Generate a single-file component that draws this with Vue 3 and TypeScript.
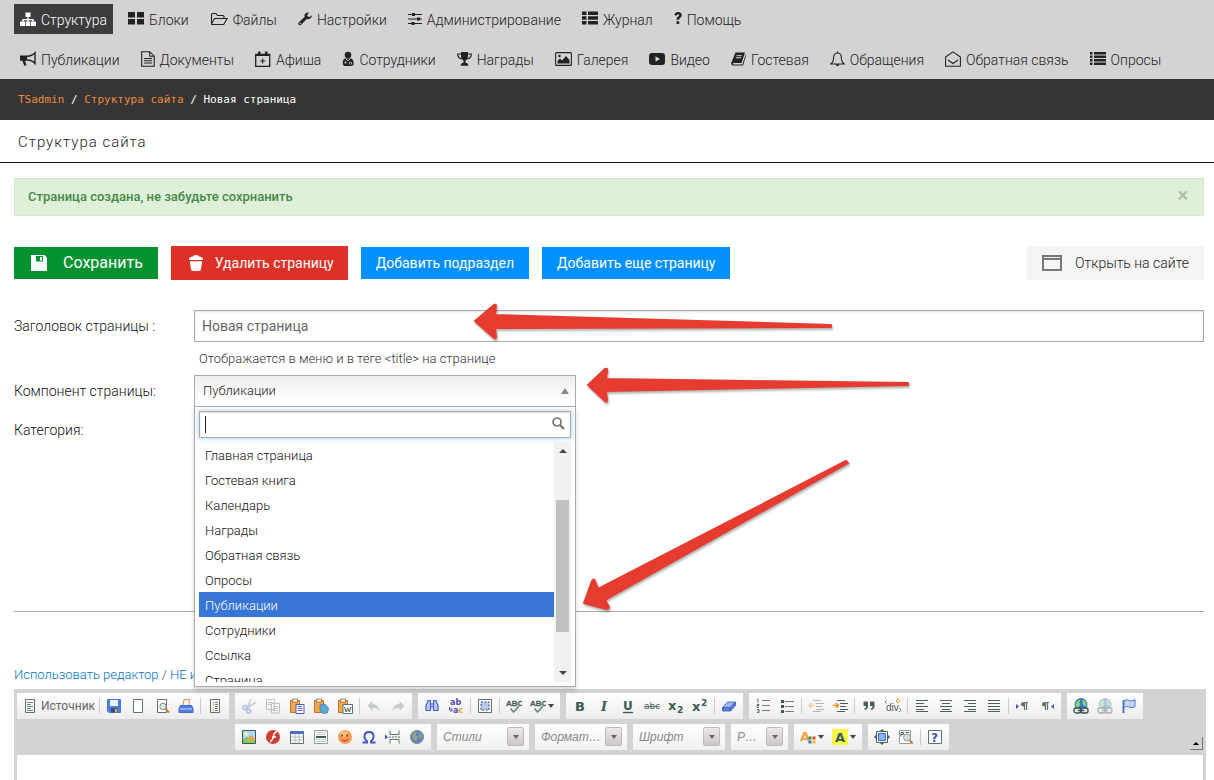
<script setup lang="ts">
import { ref } from 'vue'

interface NavItem { label: string; icon: string; w: number; active?: boolean }
interface Tool { icon?: string; title?: string; sep?: boolean; label?: string; caret?: boolean; off?: boolean }

const mainNav: NavItem[] = [
  { label: 'Структура', icon: 'sitemap', w: 16, active: true },
  { label: 'Блоки', icon: 'blocks', w: 16 },
  { label: 'Файлы', icon: 'folder', w: 18 },
  { label: 'Настройки', icon: 'wrench', w: 14 },
  { label: 'Администрирование', icon: 'sliders', w: 14 },
  { label: 'Журнал', icon: 'thlist', w: 16 },
  { label: 'Помощь', icon: 'question', w: 8 },
]

const moduleNav: NavItem[] = [
  { label: 'Публикации', icon: 'horn', w: 16 },
  { label: 'Документы', icon: 'doc', w: 14 },
  { label: 'Афиша', icon: 'calendar', w: 16 },
  { label: 'Сотрудники', icon: 'staff', w: 12 },
  { label: 'Награды', icon: 'trophy', w: 15 },
  { label: 'Галерея', icon: 'photo', w: 17 },
  { label: 'Видео', icon: 'video', w: 16 },
  { label: 'Гостевая', icon: 'book', w: 15 },
  { label: 'Обращения', icon: 'bell', w: 15 },
  { label: 'Обратная связь', icon: 'mail', w: 16 },
  { label: 'Опросы', icon: 'list', w: 16 },
]

const options: string[] = [
  'Главная страница', 'Гостевая книга', 'Календарь', 'Награды', 'Обратная связь',
  'Опросы', 'Публикации', 'Сотрудники', 'Ссылка', 'Страница',
]

const pageTitle = ref('Новая страница')
const component = ref('Публикации')
const search = ref('')

const S: Tool = { sep: true }
const sourceGroup: Tool[] = [
  { icon: 'source', title: 'Источник', label: 'Источник' }, S,
  { icon: 'save', title: 'Сохранить' }, { icon: 'newpage', title: 'Новая страница' },
  { icon: 'preview', title: 'Предварительный просмотр' }, { icon: 'print', title: 'Печать' }, S,
  { icon: 'templates', title: 'Шаблоны' },
]
const topGroups: Tool[][] = [
  [
    { icon: 'cut', title: 'Вырезать', off: true }, { icon: 'copy', title: 'Копировать', off: true },
    { icon: 'paste', title: 'Вставить' }, { icon: 'pastetext', title: 'Вставить только текст' },
    { icon: 'pasteword', title: 'Вставить из Word' }, S,
    { icon: 'undo', title: 'Отменить', off: true }, { icon: 'redo', title: 'Повторить', off: true },
  ],
  [
    { icon: 'find', title: 'Найти' }, { icon: 'replace', title: 'Заменить' }, S,
    { icon: 'selectall', title: 'Выделить все' }, S,
    { icon: 'spell', title: 'Проверить орфографию' }, { icon: 'spell', title: 'Проверка по мере ввода', caret: true },
  ],
  [
    { icon: 'bold', title: 'Полужирный' }, { icon: 'italic', title: 'Курсив' }, { icon: 'underline', title: 'Подчеркнутый' },
    { icon: 'strike', title: 'Зачеркнутый' }, { icon: 'sub', title: 'Подстрочный' }, { icon: 'sup', title: 'Надстрочный' }, S,
    { icon: 'eraser', title: 'Убрать форматирование' },
  ],
  [
    { icon: 'ol', title: 'Нумерованный список' }, { icon: 'ul', title: 'Маркированный список' }, S,
    { icon: 'outdent', title: 'Уменьшить отступ', off: true }, { icon: 'indent', title: 'Увеличить отступ' }, S,
    { icon: 'quote', title: 'Цитата' }, { icon: 'divc', title: 'Контейнер div' }, S,
    { icon: 'left', title: 'По левому краю' }, { icon: 'center', title: 'По центру' },
    { icon: 'right', title: 'По правому краю' }, { icon: 'justify', title: 'По ширине' }, S,
    { icon: 'ltr', title: 'Слева направо' }, { icon: 'rtl', title: 'Справа налево' },
  ],
  [
    { icon: 'link', title: 'Ссылка' }, { icon: 'link', title: 'Убрать ссылку', off: true }, { icon: 'flag', title: 'Якорь' },
  ],
]
const insertGroup: Tool[] = [
  { icon: 'image', title: 'Изображение' }, { icon: 'flash', title: 'Flash' }, { icon: 'table', title: 'Таблица' },
  { icon: 'hr', title: 'Горизонтальная линия' }, { icon: 'smile', title: 'Смайл' }, { icon: 'omega', title: 'Спецсимвол' },
  { icon: 'pagebreak', title: 'Разрыв страницы' }, { icon: 'globe', title: 'iFrame' },
]
const combos = [
  { text: 'Стили', title: 'Стили', small: false },
  { text: 'Формат…', title: 'Форматирование', small: false },
  { text: 'Шрифт', title: 'Шрифт', small: false },
  { text: 'Р…', title: 'Размер', small: true },
]
const tailGroups: Tool[][] = [
  [{ icon: 'color', title: 'Цвет текста', caret: true }, { icon: 'bgcolor', title: 'Цвет фона', caret: true }],
  [{ icon: 'maximize', title: 'Развернуть' }, { icon: 'showblocks', title: 'Отображать блоки' }, S, { icon: 'about', title: 'О редакторе' }],
]

const page = '<path d="M3.5 1.5h9v13h-9z" fill="#fff" stroke="#5d716e"/>'
const board = '<path d="M1.500 2.500h9v12h-9z" fill="#f0a848" stroke="#b9732c"/><path d="M3.500 1h5v3h-5z" fill="#f5efe4" stroke="#8a6a45" stroke-width=".8"/>'
const glob = '<circle cx="8" cy="6.500" r="6" fill="#3f6fd8" stroke="#35507a" stroke-width=".7"/><path d="M2.500 6q1-4 5-4.500l-1 3 1 2-2 3-3-1zM9.500 1.500q4 1 4 6l-2 1-2-3z" fill="#74dc70"/><rect x="1" y="10" width="7" height="5" rx="2" fill="#dbe6e2" stroke="#35524e" stroke-width="1.300"/><rect x="8" y="10" width="7" height="5" rx="2" fill="#dbe6e2" stroke="#35524e" stroke-width="1.300"/><path d="M5 12.500h6" stroke="#35524e" stroke-width="1.500"/>'

const icons: Record<string, string> = {
  sitemap: '<path d="M5.500 1.500h5v4.500h-1.800v2h5v2.500H16V15h-5v-4.500h1.300V9.300H8.700v1.200h1.600V15h-4.600v-4.500h1.600V9.300H3.700v1.200H5V15H0v-4.500h2.300V8h5V6H5.500z"/>',
  blocks: '<path d="M0 1h7v5.500H0zM9 1h7v5.500H9zM0 8h7v5.500H0zM9 8h7v5.500H9z"/>',
  folder: '<path d="M1.500 13V3.500q0-1 1-1h3.500l1.500 2h5.500q1 0 1 1V7M1.300 13.200 4.500 7.500h12.700l-3.500 6H2q-.7 0-.7-.5" fill="none" stroke="currentColor" stroke-width="1.100"/>',
  wrench: '<path d="M13.800 4.300 11.500 6 9.700 5.600 9.200 4l2-2.400Q8.500.8 6.900 3q-.7 1.300-.3 2.900L.7 11.600q-1 1.200 0 2.200t2.200.1l5.800-5.800q1.800.5 3.500-.6 1.900-1.400 1.600-3.200zM2.300 13.200a.7.7 0 110-1.400.7.7 0 010 1.400z"/>',
  sliders: '<path d="M0 3.500h14M0 8h14M0 12.500h14" stroke="currentColor" stroke-width="1.200"/><path d="M4 2h3v3H4zM9 6.500h3v3H9zM3.500 11h3v3h-3z"/>',
  thlist: '<path d="M0 .5h4.500v3.600H0zM6 .5h10v3.600H6zM0 5.200h4.500v3.600H0zM6 5.200h10v3.600H6zM0 9.900h4.500v3.600H0zM6 9.900h10v3.600H6z"/>',
  question: '<path d="M.3 4Q1 1 4.200 1 7.800 1.200 7.800 4.300q0 1.500-1.800 2.600-.9.500-.9 1.500v.4H2.600V8q0-1.500 1.500-2.400 1.100-.7 1-1.300-.1-1-1.200-1-.8 0-1.500 1.500zM2.500 10.300h2.700V13H2.500z"/>',
  horn: '<path d="M0 4.500h7v5.200H5l1.500 4.500-2.200.6-2-5.100H0z"/><path d="M7 5.200q5 0 8-3.400v10.700Q12 9 7 9" fill="none" stroke="currentColor" stroke-width="1.400"/>',
  doc: '<path d="M.7.700h8l4.500 4.500v10H.7zM8.700.700v4.500h4.500" fill="none" stroke="currentColor" stroke-width="1.100"/><path d="M3 7.500h8M3 9.700h8M3 12h8" stroke="currentColor" stroke-width="1"/>',
  calendar: '<path d="M.700 3.500h14v11.800H.700z" fill="none" stroke="currentColor" stroke-width="1.300"/><path d="M.7 3h14v2H.7zM3 .5h2.500V4H3zM10 .5h2.500V4H10z"/><path d="M7.700 7.500v5M5.200 10h5" stroke="currentColor" stroke-width="1.100"/>',
  staff: '<circle cx="6" cy="4" r="3.300"/><path d="M1 13.500Q0 8.500 3 7.500h6q3 1 2.500 6L10 15H2z"/><circle cx="3.500" cy="11.500" r="1" fill="#d3d3d3"/><path d="M7.500 13.500v-2h2v2M4 8l2 2 2-2" fill="none" stroke="#d3d3d3" stroke-width=".8"/>',
  trophy: '<path d="M4 1h7v4q0 3.500-2.500 4.500v2q2.700.5 3 3.300h-8q.3-2.800 3-3.300v-2Q4 8.500 4 5z"/><path d="M4 3H.7q0 4.500 4.300 5M11 3h3.300q0 4.500-4.300 5" fill="none" stroke="currentColor" stroke-width="1.200"/>',
  photo: '<rect x=".6" y="1.600" width="15.800" height="12.800" rx="1" fill="none" stroke="currentColor" stroke-width="1.100"/><circle cx="4.500" cy="5" r="1.300"/><path d="M2.500 12.500V10L5 7.500l2 2 4-4.500 3.500 4v3.500z"/>',
  video: '<rect y="2" width="16" height="12" rx="3"/><path d="M6.500 5.200v5.600l4.500-2.800z" fill="#d3d3d3"/>',
  book: '<path d="M4.500 1.500h9.500L10.500 12H2.500q-1 1 0 1.600h8.800L15 3q.3 1.500 0 2l-3 9.500H2Q0 14.200.2 12z"/><path d="M5.500 4.700h5.300M4.800 6.800h5.300" stroke="#d3d3d3"/>',
  bell: '<path d="M7.500.500v1.200M3.700 6Q4 2 7.500 2t3.800 4q0 5 3 7H.7q3-2 3-7z" fill="none" stroke="currentColor" stroke-width="1.100"/><path d="M5.500 13.300h4q-.5 2-2 2t-2-2z"/>',
  mail: '<path d="M.6 6 8 .800 15.400 6v9.300H.6zM3 9l5 3.500L13 9" fill="none" stroke="currentColor" stroke-width="1.100"/>',
  list: '<path d="M0 1h2.500v2.500H0zM4 1h12v2.500H4zM0 4.500h2.500V7H0zM4 4.500h12V7H4zM0 8h2.500v2.500H0zM4 8h12v2.500H4zM0 11.500h2.500V14H0zM4 11.500h12V14H4z"/>',
  floppy: '<path d="M0 0h13.500L16 2.500V16H0zM5 1v5.500h7V1zM9 2h2v3.500H9z" fill-rule="evenodd"/>',
  trash: '<path d="M5 1.500Q5 0 8 0t3 1.500q3.500.5 4 2.500v1H1V4q.5-2 4-2.500zM1.800 6.200h12.400L13 14.500q0 1.500-5 1.500t-5-1.500z"/>',
  window: '<path d="M1 1h18v14H1z" fill="none" stroke="currentColor" stroke-width="2"/><path d="M1 3h18v2H1z"/><path d="M2 2.500h4M8 2.500h10" stroke="#f4f4f4" stroke-dasharray="1 1"/>',
  magnify: '<circle cx="5" cy="5" r="4" fill="none" stroke="#777" stroke-width="1.700"/><path d="m8 8 4 4" stroke="#777" stroke-width="2.400"/>',
  source: page + '<path d="M5 4.500h6M5 8.500h6M5 12.500h6M5 6.500h4M5 10.500h4" stroke="#6d7f7c"/>',
  save: '<path d="M1.500 1.500h13v13H3l-1.500-1.500z" fill="#4a7de0" stroke="#4a74d8"/><path d="M4 2h8v6H4z" fill="#f4f7ff"/><path d="M5 10h6.500v4.500H5z" fill="#3a4c78"/><path d="M9 11h2v3.500H9z" fill="#f0a848"/>',
  newpage: page,
  preview: page + '<circle cx="9" cy="8.500" r="3.200" fill="#dfe6e6" stroke="#7a8c8a"/><path d="m11.500 11 3.500 3.500" stroke="#c87a34" stroke-width="2"/>',
  print: '<path d="m5 7 1-5.500h5.500L11 7" fill="#fdf6ec" stroke="#d8914a"/><path d="M2.500 7.500h11l1.500 3v4H1v-4z" fill="#4f7de0" stroke="#3f68c8"/><path d="M2 11h12" stroke="#c8d6f8"/>',
  templates: page + '<path d="M8 4.500h3M8 6.500h3M8 8.500h3M8 10.500h3M8 12.500h3" stroke="#6d7f7c"/><path d="M6.500 4v9" stroke="#e8a048" stroke-width="1.500" stroke-dasharray="1.500 1"/>',
  cut: '<path d="m10 1-3.500 9M15 4 7 9.500" stroke="#8696a6" stroke-width="1.800"/><circle cx="4" cy="9.500" r="2" fill="none" stroke="#4a68d0" stroke-width="1.600"/><circle cx="7.500" cy="13" r="2" fill="none" stroke="#4a68d0" stroke-width="1.600"/>',
  copy: '<path d="M1.500 1.500h8v10h-8zM6.500 5.500h8v9.500h-8z" fill="#fff" stroke="#5d716e"/><path d="M3 4.500h5M3 6.500h3M8 8.500h5M8 10.500h5M8 12.500h5" stroke="#6d7f7c"/>',
  paste: board + '<path d="M7 6.500h8v9H7z" fill="#fff" stroke="#4a5db8"/><path d="M8.500 8.500H13M8.500 10.500h5M8.500 12.500h5" stroke="#5a6ec8"/>',
  pastetext: board + '<path d="m7 7 5-1 3.500 4-1 5-5 .5L7 12z" fill="#5aa8d8" stroke="#3a7aa8" stroke-width=".7"/>',
  pasteword: board + '<path d="M6 6.500h9.500v9H6z" fill="#fff" stroke="#5d716e"/><path d="m7.500 9 1.500 5 1.700-4 1.500 4L14 9" fill="none" stroke="#4a605d"/>',
  undo: '<path d="M6.500 3v3q6 0 7 7-2.500-3.300-7-3.300v3L1.500 7.800z" fill="#7c908c"/>',
  redo: '<path d="M9.500 3v3q-6 0-7 7 2.500-3.300 7-3.300v3l5-4.900z" fill="#7c908c"/>',
  find: '<path d="M4 2.500h2.500V12.500H2V7.500zM12 2.500H9.500V12.500H14V7.500zM6.500 6h3v3h-3z" fill="#b9c9f4" stroke="#4a60c0" stroke-width="1.200"/>',
  replace: '<text x="2" y="7" font-family="DejaVu Sans" font-size="8" font-weight="bold" fill="#4f4fb8">ab</text><text x="5" y="15" font-family="DejaVu Sans" font-size="8" font-weight="bold" fill="#4f4fb8">a<tspan fill="#f0a030">c</tspan></text><path d="M1.500 9v3H4M2.500 10l2 2-2 2" fill="none" stroke="#4f4fb8"/>',
  selectall: '<path d="M1.500 1.500h13v13h-13z" fill="#fff" stroke="#5d716e"/><path d="M4 4h8v8H4z" fill="#b6ccf4" stroke="#2f3f60" stroke-dasharray="2 1.500"/>',
  spell: '<text x="0" y="8" font-family="Liberation Sans" font-size="8" font-weight="bold" stroke="#4a605d" stroke-width=".3" fill="#4a605d">ABC</text><path d="m4.500 10.500 3 3.500 5.500-6" fill="none" stroke="#5d8f86" stroke-width="1.700"/>',
  bold: '<text x="3" y="13" font-family="DejaVu Sans" font-size="13" font-weight="bold" fill="#3c5a55">B</text>',
  italic: '<text x="5" y="13" font-family="DejaVu Serif" font-size="13" font-weight="bold" font-style="italic" fill="#3c5a55">I</text>',
  underline: '<text x="3" y="12" font-family="DejaVu Sans" font-size="12" font-weight="bold" fill="#3c5a55">U</text><path d="M3 14.500h10" stroke="#3c5a55" stroke-width="1.400"/>',
  strike: '<text x="0" y="11" font-family="DejaVu Sans" font-size="9" font-weight="400" fill="#4a605d">abc</text><path d="M0 8.500h16" stroke="#4a605d" stroke-width=".8"/>',
  sub: '<text x="0" y="12" font-family="DejaVu Sans" font-size="13" font-weight="bold" fill="#3c5a55">x</text><text x="9" y="15" font-family="DejaVu Sans" font-size="9" font-weight="bold" fill="#3c5a55">2</text>',
  sup: '<text x="0" y="13" font-family="DejaVu Sans" font-size="13" font-weight="bold" fill="#3c5a55">x</text><text x="9" y="8" font-family="DejaVu Sans" font-size="9" font-weight="bold" fill="#3c5a55">2</text>',
  eraser: '<path d="m1.500 9.500 5-5.500h8l-5 5.500z" fill="#9db8f4" stroke="#3a58b8" stroke-width=".8"/><path d="M1.500 9.500h8v3.500h-8zM9.500 9.500l5-5.500v3.500l-5 5.500z" fill="#5a80e0" stroke="#3a58b8" stroke-width=".8"/>',
  ol: '<path d="M7 2.500h8M7 7.500h8M7 12.500h8" stroke="#6d7f7c"/><path d="M2 1.500h1v3M2 6.500h2v1H2v2h2M2 11.500h2v3H2M2.500 13H4" fill="none" stroke="#4a605d" stroke-width=".9"/>',
  ul: '<path d="M6 3.500h9M6 8.500h9M6 13.500h9" stroke="#6d7f7c"/><path d="M2 2h3v3H2zM2 7h3v3H2zM2 12h3v3H2z" fill="#3c5a55"/>',
  outdent: '<path d="M5 2.500h8M8 5.500h8M8 8.500h6M8 11.500h8M5 13.500h8" stroke="#4a605d" stroke-width="1.200"/><path d="M3.500 5 1 7.500 3.500 10M1 7.500h5.500" fill="none" stroke="#f09020" stroke-width="1.500"/>',
  indent: '<path d="M5 2.500h8M8 5.500h8M8 8.500h6M8 11.500h8M5 13.500h8" stroke="#4a605d" stroke-width="1.200"/><path d="M4 5l2.500 2.500L4 10M1 7.500h5.500" fill="none" stroke="#f09020" stroke-width="1.500"/>',
  quote: '<path d="M2.500 3.500h4.500v4.500q0 3.500-3.500 4v-1.500q1.500-.5 1.500-2.500H2.500zM9 3.500h4.500v4.500q0 3.500-3.500 4v-1.500q1.500-.5 1.500-2.500H9z" fill="#4a605d"/>',
  divc: '<text x="1" y="13" font-family="Liberation Sans" font-size="10" font-weight="400" fill="#4a605d">div</text><path d="M1.500 2.500 0 4l1.500 1.500M14.500 10 16 12l-2 2" fill="none" stroke="#4a605d" stroke-width=".8"/><path d="M13 1l2 2-2 2-2-2z" fill="#fff" stroke="#f0a030"/>',
  left: '<path d="M2 2.500h12M2 5.500h8M2 8.500h12M2 11.500h8M2 13.500h12" stroke="#4a605d" stroke-width="1.200"/>',
  center: '<path d="M2 2.500h12M4 5.500h8M2 8.500h12M4 11.500h8M2 13.500h12" stroke="#4a605d" stroke-width="1.200"/>',
  right: '<path d="M2 2.500h12M6 5.500h8M2 8.500h12M6 11.500h8M2 13.500h12" stroke="#4a605d" stroke-width="1.200"/>',
  justify: '<path d="M2 2.500h12M2 5.500h12M2 8.500h12M2 11.500h12M2 13.500h12" stroke="#4a605d" stroke-width="1.200"/>',
  ltr: '<path d="M1 6v5l3-2.500z" fill="#4a50b0"/><path d="M9 4.500h4M9.500 4.500V12M11.500 4.500V12" stroke="#5d716e" stroke-width="1.200"/><path d="M9.500 4q-3.500 0-3.500 2.300t3.500 2.200z" fill="#5d716e"/>',
  rtl: '<path d="M15 6v5l-3-2.500z" fill="#4a50b0"/><path d="M6 4.500h4M6.500 4.500V12M8.500 4.500V12" stroke="#5d716e" stroke-width="1.200"/><path d="M6.500 4Q3 4 3 6.300t3.500 2.200z" fill="#5d716e"/>',
  link: glob,
  flag: '<path d="M2.500 2v13" stroke="#4a60c8" stroke-width="1.800"/><path d="M3 2.500q3-1.500 5 0t6-1v7q-3 2-6 .5t-5 .5z" fill="#c9d6e8" stroke="#4a78e8"/>',
  image: '<path d="M1.500 1.500h13v13h-13z" fill="#a9dcf4" stroke="#3c5a55"/><path d="M2 14v-4l4-2 8 3v3z" fill="#8cc858"/><path d="M7 9l3-3 3.500 3v2.500H8z" fill="#f0a050"/><circle cx="5" cy="5" r="2" fill="#f8f0a8"/>',
  flash: '<circle cx="8" cy="8" r="7" fill="#cc4030"/><path d="M12 3q-3 0-3.500 4T5 13M7 8h4" fill="none" stroke="#fff" stroke-width="1.400"/>',
  table: '<path d="M1.500 2.500h13v12h-13z" fill="#fff" stroke="#5d716e"/><path d="M1 2h14v3H1z" fill="#4f70c8"/><path d="M2 8h12M2 11h12M6 5v9M10 5v9" stroke="#b0bcbb"/>',
  hr: '<path d="M1.500 1.500h13v13h-13z" fill="#fff" stroke="#8f9d9b"/><path d="M3 3.500h10M3 5.500h10M3 10.500h10M3 12.500h10" stroke="#c3cac9"/><path d="M3 8h10" stroke="#3c5a55" stroke-width="2"/>',
  smile: '<circle cx="8" cy="8" r="7" fill="#f59a50"/><ellipse cx="7" cy="5" rx="4" ry="3" fill="#fbbf7c"/><path d="M5 5.500v2M10 5.500v2" stroke="#5a3a20" stroke-width="1.400"/><path d="M4 9.500q3.500 3.500 7.500 0-.5 3-3.500 3t-4-3z" fill="#c05030"/>',
  omega: '<path d="M1.500 13.500H6v-1.500Q3.500 10.500 3.500 7.500q0-4.500 4.500-4.500t4.500 4.500q0 3-2.500 4.500v1.500h4.500" fill="none" stroke="#4055b8" stroke-width="1.900"/>',
  pagebreak: '<path d="M5 1.500V5.500h9V1.500M5 14.500v-4h9v4" fill="#fff" stroke="#5d716e"/><path d="M4 8h11" stroke="#5d716e" stroke-dasharray="2 1"/><path d="M0 5.500v5L3 8z" fill="#3f4fb0"/>',
  globe: '<circle cx="8" cy="8" r="6.500" fill="#6280b8" stroke="#7a8aa0"/><path d="M3 6q2-4 5-3l-1 3 2 2-2 4-3-2zM10 4q3 0 3.500 4l-3 2z" fill="#8da680"/>',
  color: '<text x="0" y="12" font-family="DejaVu Sans" font-size="13" font-weight="bold" fill="#f0a048">A</text><path d="M8.500 7.500h3v3h-3z" fill="#28a028"/><path d="M12.500 7.500h3v3h-3z" fill="#f04030"/><path d="M8.500 11.500h3v3h-3z" fill="#3a70e0"/><path d="M12.500 11.500h3v3h-3z" fill="#f8c020"/>',
  bgcolor: '<path d="M0 0h16v16H0z" fill="#fff64a"/><text x="3" y="13" font-family="DejaVu Sans" font-size="13" font-weight="bold" fill="#3c5a55">A</text>',
  maximize: '<path d="M2.500 2.500h11v11h-11z" fill="#fff" stroke="#4a605d"/><path d="M4.500 4.500h7v7h-7z" fill="#8db2f4" stroke="#3a6ae0"/><path d="M8 0l2 2H6zM8 16l2-2H6zM0 8l2-2v4zM16 8l-2-2v4z" fill="#4a605d"/>',
  showblocks: '<path d="M1.500 1.500h11v13h-11z" fill="#fff" stroke="#8f9d9b"/><path d="M3 7.500v-4h2.500v2H3M8 3.500h3" stroke="#4a605d" fill="none"/><circle cx="9" cy="8.500" r="3.500" fill="#d5dcdc" stroke="#8f9d9b"/><path d="m11.700 11.500 3 3" stroke="#c87a34" stroke-width="2"/>',
  about: '<path d="M1.500 1.500h13v13h-13z" fill="#fff" stroke="#5d716e"/><text x="4" y="13" font-family="DejaVu Sans" font-size="12" font-weight="bold" fill="#3f4fb0">?</text>',
}
</script>

<template>
  <div class="page">
    <header class="top">
      <nav class="nav" aria-label="Основное меню">
        <a v-for="n in mainNav" :key="n.label" href="#" class="nav-item" :class="{ active: n.active }">
          <svg :width="n.w" height="16" :viewBox="`0 0 ${n.w} 16`" aria-hidden="true" v-html="icons[n.icon]"></svg>
          <span>{{ n.label }}</span>
        </a>
      </nav>
      <nav class="nav" aria-label="Модули">
        <a v-for="n in moduleNav" :key="n.label" href="#" class="nav-item">
          <svg :width="n.w" height="16" :viewBox="`0 0 ${n.w} 16`" aria-hidden="true" v-html="icons[n.icon]"></svg>
          <span>{{ n.label }}</span>
        </a>
      </nav>
    </header>

    <div class="crumbs">
      <a href="#">TSadmin</a> / <a href="#">Структура сайта</a> / <span>Новая страница</span>
    </div>
    <h1 class="title">Структура сайта</h1>

    <main class="content">
      <div class="alert" role="status">
        <span>Страница создана, не забудьте сохрнанить</span>
        <button type="button" class="close" aria-label="Закрыть">×</button>
      </div>

      <div class="actions">
        <button type="button" class="btn green">
          <svg width="16" height="16" viewBox="0 0 16 16" aria-hidden="true" v-html="icons.floppy"></svg>Сохранить
        </button>
        <button type="button" class="btn red">
          <svg width="16" height="16" viewBox="0 0 16 16" aria-hidden="true" v-html="icons.trash"></svg>Удалить страницу
        </button>
        <button type="button" class="btn blue">Добавить подраздел</button>
        <button type="button" class="btn blue">Добавить еще страницу</button>
        <a href="#" class="btn plain">
          <svg width="20" height="16" viewBox="0 0 20 16" aria-hidden="true" v-html="icons.window"></svg>Открыть на сайте
        </a>
      </div>

      <form class="form" @submit.prevent>
        <label for="page-title" class="lbl">Заголовок страницы :</label>
        <div>
          <input id="page-title" v-model="pageTitle" type="text" class="text" />
          <p class="hint">Отображается в меню и в теге &lt;title&gt; на странице</p>
        </div>
        <label for="page-component" class="lbl">Компонент страницы:</label>
        <div class="chooser">
          <button id="page-component" type="button" class="chosen" aria-haspopup="listbox" aria-expanded="true">
            <span>{{ component }}</span><i class="tri up gray"></i>
          </button>
          <div class="drop">
            <div class="search">
              <input v-model="search" type="text" aria-label="Поиск компонента" />
              <i class="cursor"></i>
              <svg width="13" height="13" viewBox="0 0 13 13" aria-hidden="true" v-html="icons.magnify"></svg>
            </div>
            <div class="results">
              <ul role="listbox" aria-label="Компонент страницы">
                <li
                  v-for="o in options" :key="o" role="option"
                  :aria-selected="o === component" :class="{ on: o === component }"
                  @click="component = o"
                >{{ o }}</li>
              </ul>
              <div class="bar" aria-hidden="true"><i class="tri up"></i><b></b><i class="tri"></i></div>
            </div>
          </div>
        </div>
        <span class="lbl">Категория:</span>
      </form>

      <p class="switch"><a href="#">Использовать редактор</a> / <a href="#">НЕ использовать</a></p>
    </main>

    <section class="editor" aria-label="Редактор">
      <div class="bars">
        <div class="group">
          <template v-for="(t, i) in sourceGroup" :key="i">
            <i v-if="t.sep" class="sep"></i>
            <button v-else type="button" class="tool" :class="{ wide: t.label }" :title="t.title">
              <svg width="16" height="16" viewBox="0 0 16 16" aria-hidden="true" v-html="icons[t.icon!]"></svg>
              <span v-if="t.label">{{ t.label }}</span>
            </button>
          </template>
        </div>
        <div class="stack">
          <div class="row">
            <div v-for="(g, gi) in topGroups" :key="gi" class="group">
              <template v-for="(t, i) in g" :key="i">
                <i v-if="t.sep" class="sep"></i>
                <button v-else type="button" class="tool" :class="{ off: t.off, carets: t.caret }" :title="t.title">
                  <svg width="16" height="16" viewBox="0 0 16 16" aria-hidden="true" v-html="icons[t.icon!]"></svg>
                  <i v-if="t.caret" class="tri small"></i>
                </button>
              </template>
            </div>
          </div>
          <div class="row">
            <div class="group">
              <button v-for="t in insertGroup" :key="t.title" type="button" class="tool" :title="t.title">
                <svg width="16" height="16" viewBox="0 0 16 16" aria-hidden="true" v-html="icons[t.icon!]"></svg>
              </button>
            </div>
            <div v-for="c in combos" :key="c.title" class="combo" :class="{ short: c.small }">
              <select :aria-label="c.title"><option>{{ c.text }}</option></select>
              <span class="knob" aria-hidden="true"><i class="tri small"></i></span>
            </div>
            <div v-for="(g, gi) in tailGroups" :key="gi" class="group">
              <template v-for="(t, i) in g" :key="i">
                <i v-if="t.sep" class="sep"></i>
                <button v-else type="button" class="tool" :class="{ carets: t.caret }" :title="t.title">
                  <svg width="16" height="16" viewBox="0 0 16 16" aria-hidden="true" v-html="icons[t.icon!]"></svg>
                  <i v-if="t.caret" class="tri small"></i>
                </button>
              </template>
            </div>
          </div>
        </div>
        <button type="button" class="collapse" aria-label="Свернуть панель"><i class="tri up"></i></button>
      </div>
      <div class="area" contenteditable="true" role="textbox" aria-label="Текст страницы"></div>
    </section>

    <svg class="arrows" width="920" height="620" viewBox="0 0 920 620" aria-hidden="true">
      <g fill="#e63c30" stroke="#e63c30" stroke-width="2" stroke-linejoin="round">
        <path d="M475 321 494 305Q496 304 496 306L495 315 831 325V327L495 328 496 337Q496 339 494 338z" />
        <path d="M588 385 605 369Q608 368 607 371L606 379 908 383V385L606 391 607 400Q607 403 605 401z" />
        <path d="M584 603 592 581Q594 578 595 581L598 589 846 461 848 463 605 600 609 607Q609 609 606 609z" />
      </g>
    </svg>
  </div>
</template>

<style>
html, body { margin: 0; background: #fff; }
</style>

<style scoped>
* { box-sizing: border-box; }
.page {
  position: relative; min-height: 100vh; display: flex; flex-direction: column;
  font: 300 14px/20px Roboto, "Open Sans", sans-serif; color: #222; overflow: hidden;
}
a { color: inherit; text-decoration: none; }
button, input, select { font: inherit; color: inherit; margin: 0; border-radius: 0; }
svg { flex: none; fill: currentColor; }

.top { background: #d3d3d3; padding: 4px 14px 5px; display: grid; gap: 10px; }
.nav { display: flex; gap: 9px; }
.nav-item { display: flex; align-items: center; gap: 5px; height: 30px; padding: 0 6px; white-space: nowrap; }
.nav-item span { padding-top: 1px; }
.nav-item.active { background: #3c3c3c; color: #fff; }

.crumbs {
  background: #353535; color: #fff; padding: 11px 18px 10px; white-space: pre-wrap;
  font: 400 11px/20px "DejaVu Sans Mono", monospace;
}
.crumbs a { color: #ee8a3a; }
.title { margin: 0; padding: 12px 18px 10px; font-size: 15px; line-height: 20px; font-weight: 300; letter-spacing: 1px; border-bottom: 1px solid #111; }

.content { padding: 15px 10px 0 14px; }
.alert {
  display: flex; justify-content: space-between; align-items: center; height: 38px; padding: 0 15px 0 13px;
  background: #dff0d8; border: 1px solid #d6e9c6; color: #468847; font-size: 13px; font-weight: 500;
}
.close { border: 0; background: none; padding: 0; font-size: 20px; line-height: 20px; font-weight: 700; color: #b0c0ac; height: 26px; margin-bottom: 4px; }

.actions { display: flex; align-items: center; gap: 13px; margin-top: 30px; height: 34px; }
.btn { display: flex; align-items: center; height: 32px; border: 0; padding: 0 15px; font-size: 14px; color: #fff; font-weight: 400; white-space: nowrap; }
.green { background: #049230; gap: 16px; padding-left: 17px; font-size: 16px; }
.red { background: #dd3127; gap: 11px; height: 34px; padding-left: 17px; padding-right: 14px; }
.blue { background: #0090ff; }
.plain { background: #f4f4f4; color: #222; gap: 13px; height: 34px; margin-left: auto; font-weight: 300; }
.plain svg { color: #777; }

.form {
  display: grid; grid-template-columns: 180px minmax(0, 1fr); margin-top: 30px; min-height: 302px;
  align-content: start; border-bottom: 1px solid #aaa;
}
.lbl { line-height: 32px; color: #111; }
.text {
  display: block; width: 100%; height: 32px; border: 1px solid #aaa; padding: 0 7px; background: #fff;
  font-weight: 400; color: #666; box-shadow: inset 0 1px 2px #ddd;
}
.hint { margin: 7px 0 6px 5px; font-size: 13px; color: #333; }
.chooser { position: relative; width: 382px; height: 39px; font-size: 13px; }
.chosen {
  display: flex; align-items: center; justify-content: space-between; width: 100%; height: 32px;
  border: 1px solid #aaa; padding: 0 6px 0 8px; background: linear-gradient(#eee, #fff 80%); color: #222;
}
.drop {
  position: absolute; z-index: 2; top: 31px; left: 0; width: 100%; background: #fff; border: 1px solid #aaa;
  padding: 4px; box-shadow: 0 4px 5px rgba(0, 0, 0, .15);
}
.search { display: flex; position: relative; }
.search input { width: 100%; height: 27px; border: 1px solid #aaa; padding: 0 24px 0 8px; outline: 0; box-shadow: 0 0 6px #9ccdf3, inset 0 1px 2px #ddd; }
.search svg { position: absolute; right: 6px; top: 6px; }
.cursor { position: absolute; left: 6px; top: 5px; width: 1px; height: 17px; background: #222; }
.results { display: flex; height: 240px; margin-top: 4px; }
.results ul { flex: 1; list-style: none; margin: 0; padding: 0; overflow: hidden; color: #111; }
.results li { height: 25px; line-height: 28px; padding-left: 6px; }
.results li.on { background: #3875d7; color: #fff; }
.bar { width: 17px; background: #f1f1f1; display: flex; flex-direction: column; align-items: center; padding: 7px 0; }
.bar b { width: 13px; height: 132px; margin: 47px 0 auto; background: #c1c1c1; }

.tri { border: 4px solid transparent; border-top-color: #444; border-bottom: 0; flex: none; }
.tri.up { border-top: 0; border-bottom: 4px solid #444; }
.tri.gray { border-bottom: 6px solid #888; }
.tri.small { border-width: 4px 3px 0; }

.switch { margin: 53px 0 4px; font-size: 13px; color: #444; }
.switch a { color: #0072cc; }

.editor { flex: 1; display: flex; flex-direction: column; margin: 0 8px 0 14px; background: #d3d3d3; padding: 4px 3px 0; }
.bars { display: flex; gap: 6px; align-items: flex-start; padding-bottom: 5px; }
.stack { display: grid; gap: 5px; }
.row { display: flex; gap: 6px; }
.group { display: flex; align-items: center; height: 26px; padding: 0 2px; background: linear-gradient(#fff, #ececec); }
.tool { display: flex; align-items: center; justify-content: center; width: 24px; height: 24px; border: 0; padding: 0; background: none; }
.tool.wide { width: 78px; justify-content: flex-start; gap: 3px; padding-left: 3px; font-size: 12px; font-weight: 400; color: #666; }
.tool.carets { width: 32px; gap: 2px; }
.tool.off svg { opacity: .4; }
.sep { width: 1px; height: 16px; margin: 0 2px; background: #ccc; }
.combo { position: relative; width: 92px; height: 26px; background: linear-gradient(#fff, #f0f0f0); }
.combo.short { width: 57px; }
.combo select {
  appearance: none; width: 100%; height: 100%; border: 0; background: none; padding: 0 22px 0 6px;
  font: italic 12px "Liberation Sans", sans-serif; color: #888;
}
.knob {
  position: absolute; right: 5px; top: 3px; width: 17px; height: 19px; display: flex; align-items: center; justify-content: center;
  background: linear-gradient(#eee8e8, #cfc6c6); border: 1px solid #bbb; border-radius: 2px; pointer-events: none;
}
.knob .tri { border-top-color: #666; }
.collapse {
  margin-left: auto; align-self: flex-end; width: 13px; height: 13px; padding: 0; display: flex; align-items: center; justify-content: center;
  background: #d3d3d3; border: solid #777; border-width: 0 1px 1px 0;
}
.collapse .tri { border-width: 0 3px 3px; border-bottom-color: #000; }
.area { flex: 1; min-height: 25px; background: #fff; outline: 0; }

.arrows { position: absolute; z-index: 3; left: 0; top: 0; pointer-events: none; filter: drop-shadow(1px 2px 1px rgba(0, 0, 0, .3)); }
</style>
